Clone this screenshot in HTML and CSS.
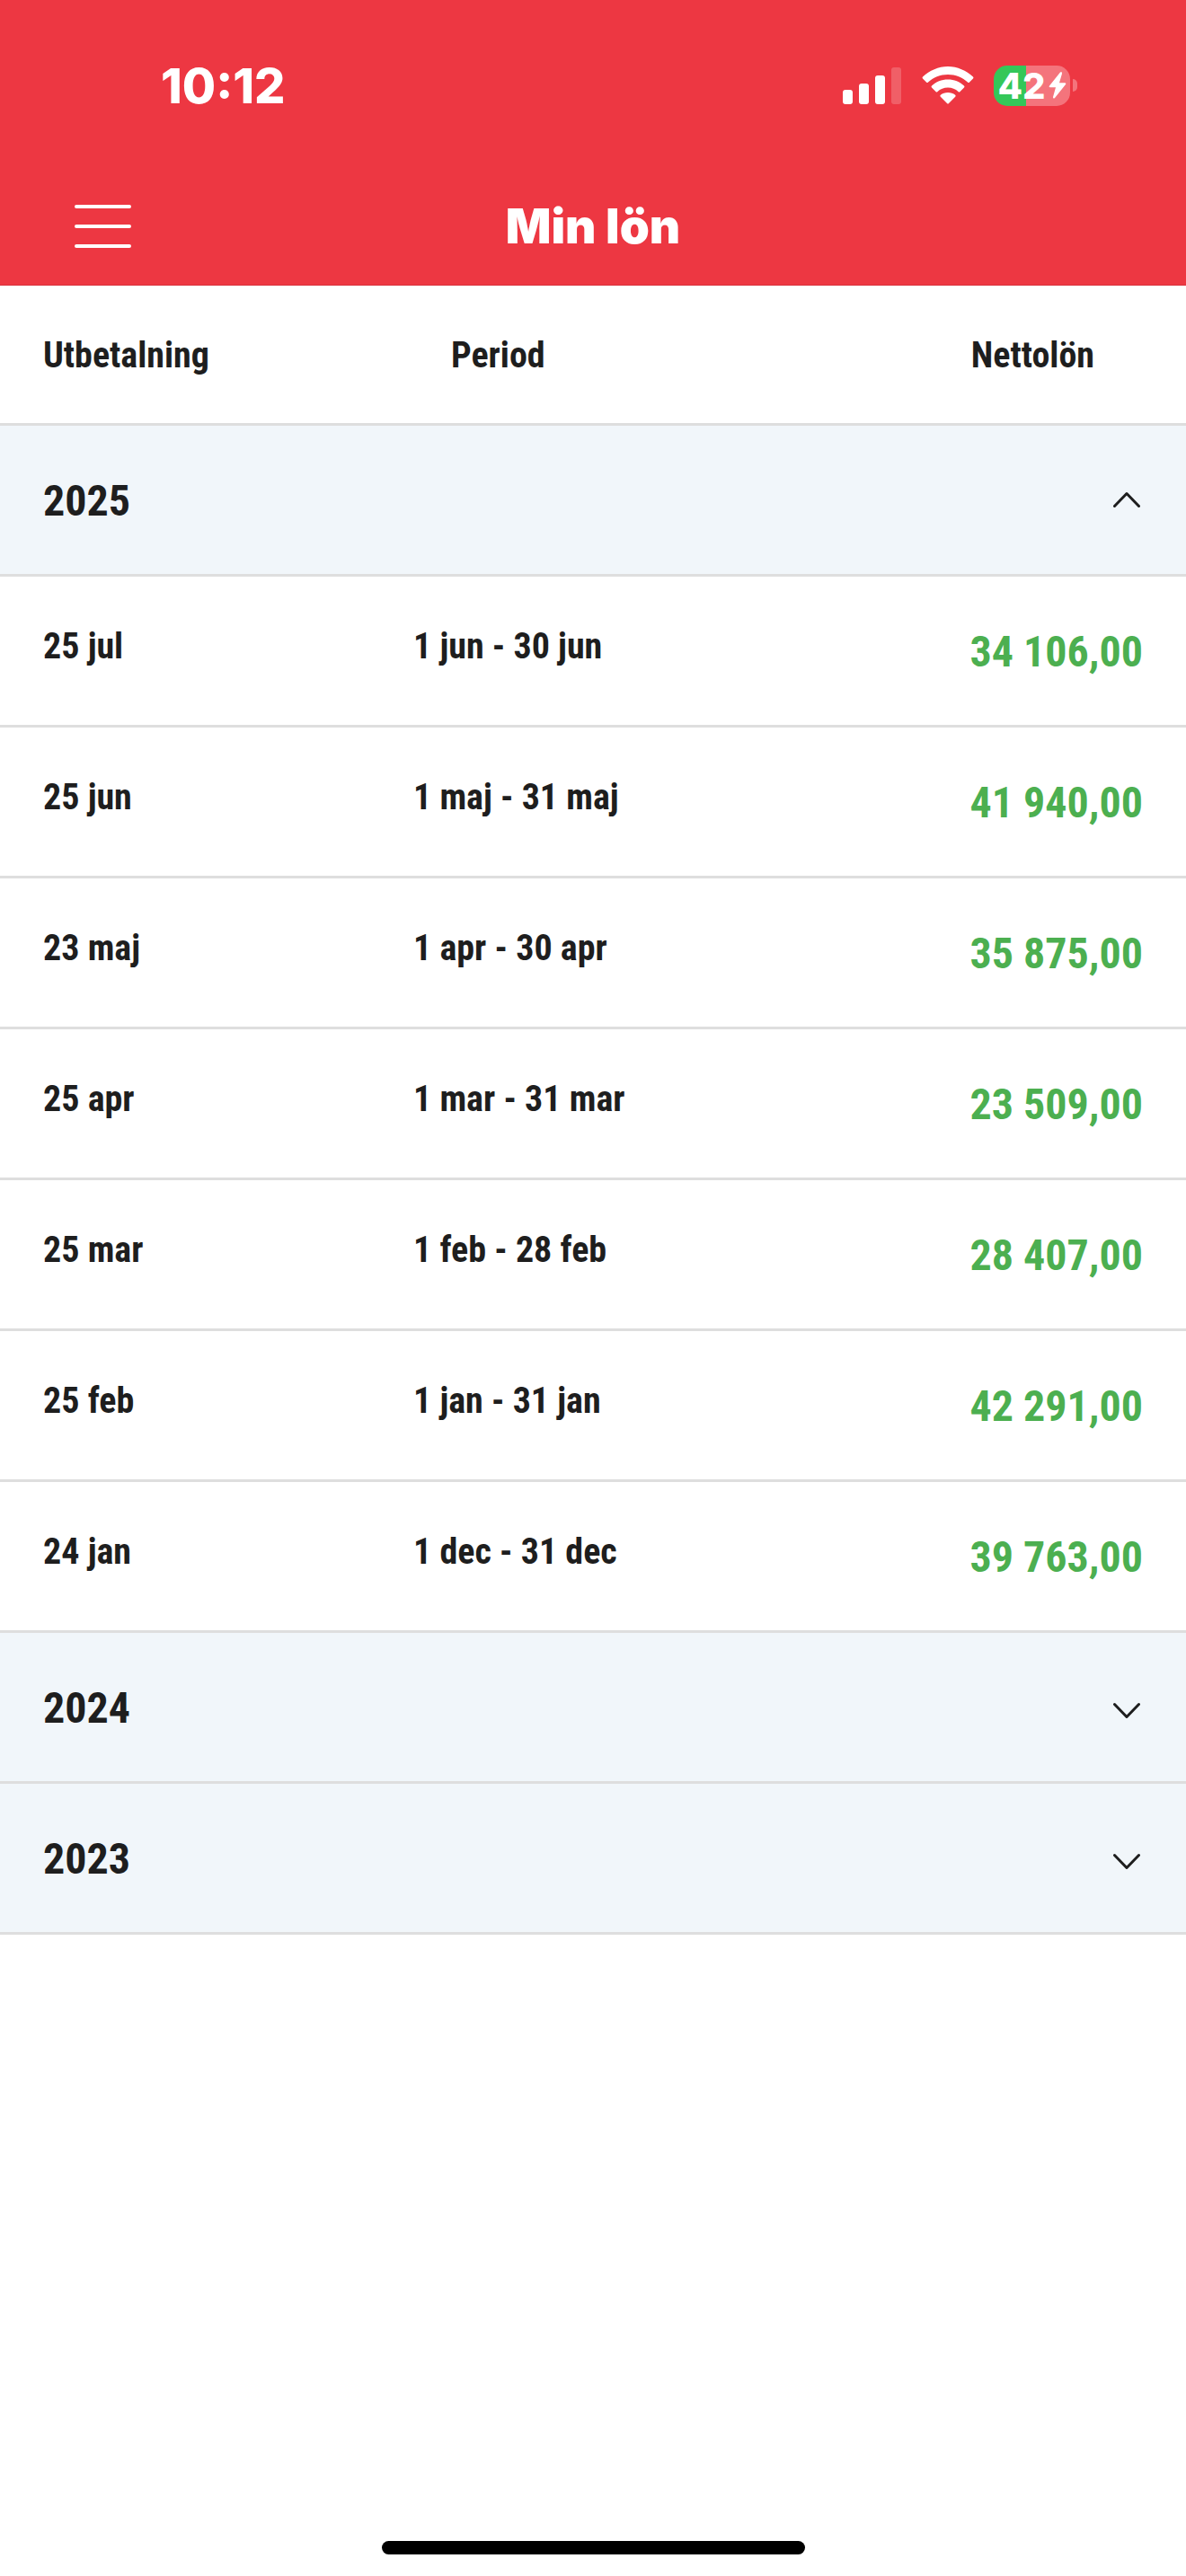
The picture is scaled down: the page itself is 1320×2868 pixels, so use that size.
FILE: index.html
```html
<!DOCTYPE html>
<html lang="sv">
<head>
    <meta charset="UTF-8">
    <meta name="viewport" content="width=device-width, initial-scale=1.0">
    <title>Min lön</title>
    <link rel="stylesheet" href="styles.css">
</head>
<body>
    <header>
        <div class="status-bar">
            <span class="time">10:12</span>
            <div class="status-icons">
                <svg class="signal" viewBox="0 0 66 42" aria-hidden="true">
                    <rect x="0" y="26" width="11" height="16" rx="3"/>
                    <rect x="18" y="19" width="11" height="23" rx="3"/>
                    <rect x="36" y="10" width="11" height="32" rx="3"/>
                    <rect class="dim" x="54" y="1" width="11" height="41" rx="3"/>
                </svg>
                <svg class="wifi" viewBox="0 0 58 42" aria-hidden="true">
                    <path d="M29 9C37.5 9 45.5 12.4 51 17.5Q52 18.5 53 17.5L57 13.5Q58 12.5 57 11.500C49.5 4.5 39.5 0 29 0S8.5 4.5 1 11.5Q0 12.5 1 13.5L5 17.5Q6 18.5 7 17.500C12.5 12.4 20.5 9 29 9Z"/>
                    <path d="M29 23.5C33.5 23.5 37.5 25.2 40.5 28Q41.5 29 42.5 28L47 23.5Q48 22.5 47 21.5C42.2 17 36 14.5 29 14.5S15.8 17 11 21.5Q10 22.5 11 23.5L15.5 28Q16.5 29 17.5 28C20.5 25.2 24.5 23.5 29 23.5Z"/>
                    <path d="M29 29C32 29 35 30 37.2 31.8Q38.2 32.7 37.2 33.7L30 41Q29 42 28 41L20.800 33.7Q19.8 32.7 20.8 31.8C23 30 26 29 29 29Z"/>
                </svg>
                <div class="battery">
                    <div class="battery-level">
                        <span>42</span>
                        <svg class="bolt" viewBox="0 0 20 30" aria-hidden="true">
                            <path d="M13 .5 1 15.5Q0 17.3 2 17.3H8L5 28Q5 30.5 7 29L19 14Q20 12.3 18 12.3H12L15 2Q15 -1 13 .5Z"/>
                        </svg>
                    </div>
                    <div class="battery-tip"></div>
                </div>
            </div>
        </div>
        <nav>
            <button type="button" class="menu" aria-label="Meny">
                <span></span>
                <span></span>
                <span></span>
            </button>
            <h1>Min lön</h1>
        </nav>
    </header>
    <main>
        <table>
            <thead>
                <tr>
                    <th class="col-date">Utbetalning</th>
                    <th class="col-period">Period</th>
                    <th class="col-net">Nettolön</th>
                </tr>
            </thead>
            <tbody>
                <tr class="year">
                    <th colspan="3">
                        <button type="button" aria-expanded="true">
                            2025
                            <svg viewBox="0 0 30 22" aria-hidden="true"><path d="M1.5 16.5 15 2.5 28.5 16.5"/></svg>
                        </button>
                    </th>
                </tr>
                <tr>
                    <td>25 jul</td>
                    <td>1 jun - 30 jun</td>
                    <td class="net">34 106,00</td>
                </tr>
                <tr>
                    <td>25 jun</td>
                    <td>1 maj - 31 maj</td>
                    <td class="net">41 940,00</td>
                </tr>
                <tr>
                    <td>23 maj</td>
                    <td>1 apr - 30 apr</td>
                    <td class="net">35 875,00</td>
                </tr>
                <tr>
                    <td>25 apr</td>
                    <td>1 mar - 31 mar</td>
                    <td class="net">23 509,00</td>
                </tr>
                <tr>
                    <td>25 mar</td>
                    <td>1 feb - 28 feb</td>
                    <td class="net">28 407,00</td>
                </tr>
                <tr>
                    <td>25 feb</td>
                    <td>1 jan - 31 jan</td>
                    <td class="net">42 291,00</td>
                </tr>
                <tr>
                    <td>24 jan</td>
                    <td>1 dec - 31 dec</td>
                    <td class="net">39 763,00</td>
                </tr>
            </tbody>
            <tbody>
                <tr class="year">
                    <th colspan="3">
                        <button type="button" aria-expanded="false">
                            2024
                            <svg viewBox="0 0 30 22" aria-hidden="true"><path d="M1.5 6.5 15 20.5 28.5 6.5"/></svg>
                        </button>
                    </th>
                </tr>
            </tbody>
            <tbody>
                <tr class="year">
                    <th colspan="3">
                        <button type="button" aria-expanded="false">
                            2023
                            <svg viewBox="0 0 30 22" aria-hidden="true"><path d="M1.5 6.5 15 20.5 28.5 6.5"/></svg>
                        </button>
                    </th>
                </tr>
            </tbody>
        </table>
    </main>
    <footer>
        <div class="home-indicator"></div>
    </footer>
</body>
</html>
```
FILE: styles.css
```css
* {
    box-sizing: border-box;
}
body {
    font-family: "Roboto Condensed", Roboto, sans-serif;
    margin: 0;
    min-height: 100vh;
    display: flex;
    flex-direction: column;
    background-color: #fff;
    color: #1e1e1e;
}
button {
    background: none;
    border: none;
    padding: 0;
    font: inherit;
    color: inherit;
    cursor: pointer;
}
header {
    background-color: #ed3742;
    color: white;
    font-family: Inter, sans-serif;
    border-bottom: 1px solid #d9333e;
}
.status-bar {
    display: flex;
    justify-content: space-between;
    align-items: center;
    height: 190px;
    padding: 0 121px 0 179px;
}
.time {
    font-size: 54px;
    font-weight: 800;
}
.status-icons {
    display: flex;
    align-items: center;
    gap: 22px;
}
.status-icons svg {
    fill: white;
}
.signal {
    width: 66px;
    height: 42px;
}
.signal .dim {
    opacity: 0.2;
}
.wifi {
    width: 58px;
    height: 42px;
}
.battery {
    display: flex;
    align-items: center;
    gap: 3px;
}
.battery-level {
    display: flex;
    align-items: center;
    justify-content: center;
    gap: 3px;
    width: 85px;
    height: 45px;
    border-radius: 15px;
    background: linear-gradient(to right, #34c759 42%, #f4747c 42%);
    font-size: 40px;
    font-weight: 800;
}
.bolt {
    width: 20px;
    height: 30px;
}
.battery-tip {
    width: 5px;
    height: 14px;
    border-radius: 0 7px 7px 0;
    background-color: #f4747c;
}
nav {
    display: grid;
    grid-template-columns: 1fr auto 1fr;
    align-items: center;
    height: 127px;
    padding: 0 83px 4px;
}
.menu {
    display: flex;
    flex-direction: column;
    gap: 18px;
    width: 63px;
}
.menu span {
    height: 4px;
    border-radius: 2px;
    background-color: white;
}
h1 {
    margin: 0;
    font-size: 53px;
    font-weight: 900;
}
table {
    width: 100%;
    table-layout: fixed;
    border-collapse: separate;
    border-spacing: 0;
    font-size: 40px;
    line-height: 60px;
    font-weight: 700;
}
th, td {
    padding: 48px 0 45px;
    border-bottom: 3px solid #dedede;
    text-align: left;
    vertical-align: top;
}
th:first-child, td:first-child {
    padding-left: 48px;
}
.col-date {
    width: 460px;
}
.col-period {
    padding-left: 42px;
}
.col-net {
    width: 25%;
    padding-right: 102px;
    text-align: right;
}
.net {
    padding-right: 48px;
    font-size: 48px;
    line-height: 72px;
    color: #4caf50;
    text-align: right;
    white-space: nowrap;
}
.year th:first-child {
    padding: 0;
    background-color: #f1f6fa;
}
.year button {
    display: flex;
    justify-content: space-between;
    align-items: center;
    width: 100%;
    padding: 48px 51px 45px 48px;
    font-size: 48px;
    line-height: 72px;
}
.year svg {
    width: 30px;
    height: 22px;
    fill: none;
    stroke: #1e1e1e;
    stroke-width: 3;
    stroke-linecap: round;
    stroke-linejoin: round;
}
footer {
    margin-top: auto;
    padding-bottom: 24px;
}
.home-indicator {
    width: 471px;
    max-width: 60%;
    height: 15px;
    margin: 0 auto;
    border-radius: 8px;
    background-color: black;
}
```
